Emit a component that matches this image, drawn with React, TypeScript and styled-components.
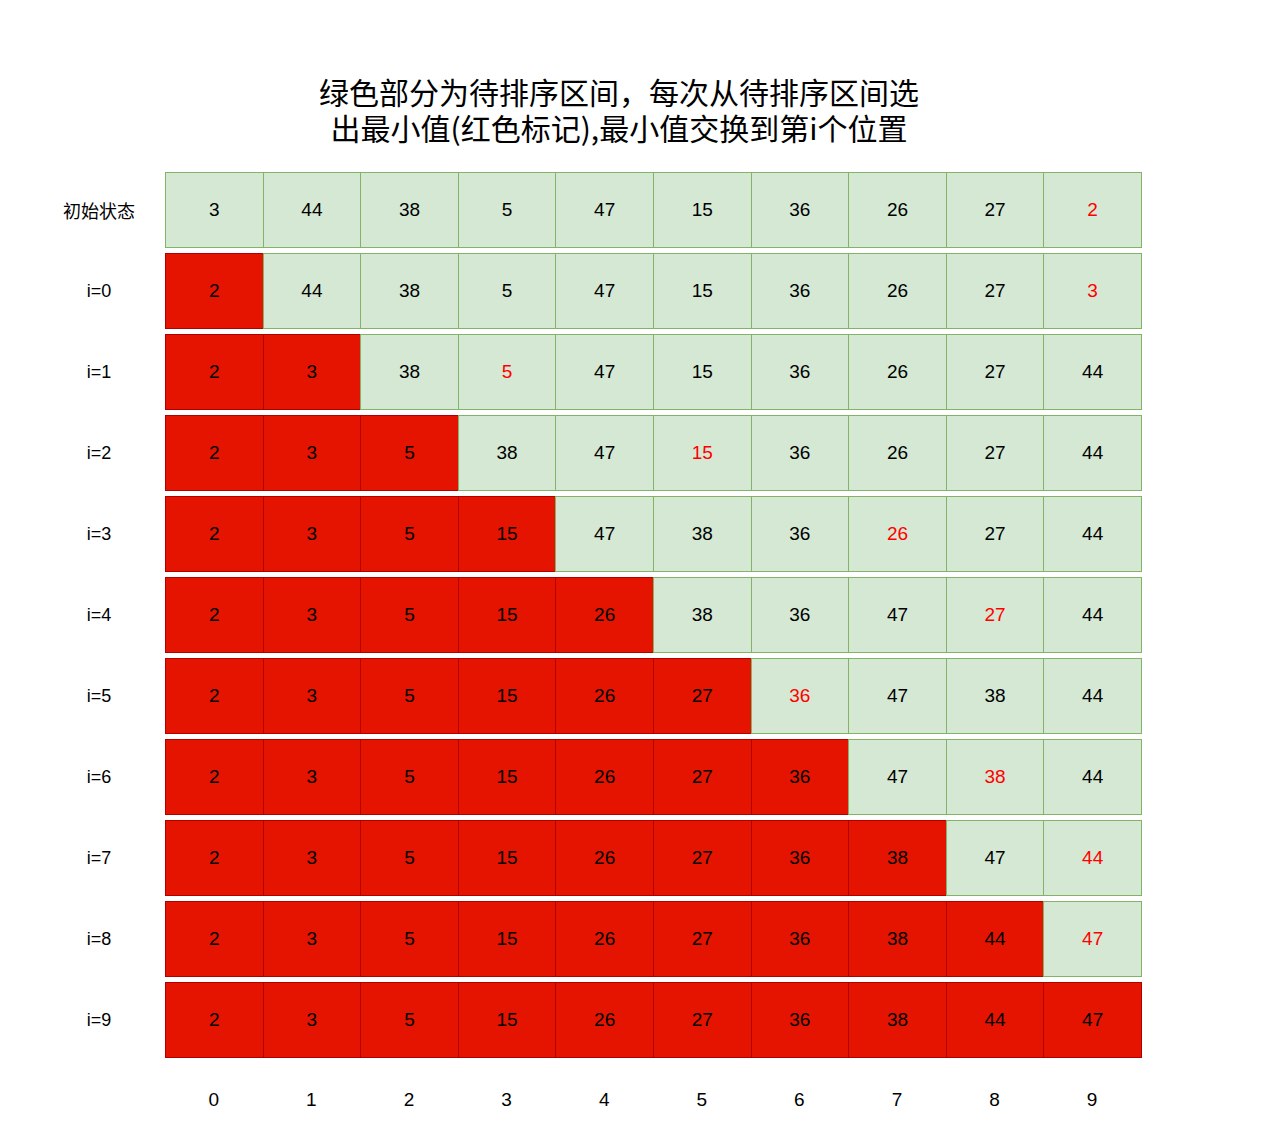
import styled, { createGlobalStyle } from "styled-components";

const GlobalStyle = createGlobalStyle`
  body {
    margin: 0;
    background: #ffffff;
    font-family: "Liberation Sans", Arial, "Noto Sans CJK SC", sans-serif;
  }
`;

type Step = { label: string; values: number[]; sorted: number; marked: number };

const steps: Step[] = [
  { label: "初始状态", values: [3, 44, 38, 5, 47, 15, 36, 26, 27, 2], sorted: 0, marked: 9 },
  { label: "i=0", values: [2, 44, 38, 5, 47, 15, 36, 26, 27, 3], sorted: 1, marked: 9 },
  { label: "i=1", values: [2, 3, 38, 5, 47, 15, 36, 26, 27, 44], sorted: 2, marked: 3 },
  { label: "i=2", values: [2, 3, 5, 38, 47, 15, 36, 26, 27, 44], sorted: 3, marked: 5 },
  { label: "i=3", values: [2, 3, 5, 15, 47, 38, 36, 26, 27, 44], sorted: 4, marked: 7 },
  { label: "i=4", values: [2, 3, 5, 15, 26, 38, 36, 47, 27, 44], sorted: 5, marked: 8 },
  { label: "i=5", values: [2, 3, 5, 15, 26, 27, 36, 47, 38, 44], sorted: 6, marked: 6 },
  { label: "i=6", values: [2, 3, 5, 15, 26, 27, 36, 47, 38, 44], sorted: 7, marked: 8 },
  { label: "i=7", values: [2, 3, 5, 15, 26, 27, 36, 38, 47, 44], sorted: 8, marked: 9 },
  { label: "i=8", values: [2, 3, 5, 15, 26, 27, 36, 38, 44, 47], sorted: 9, marked: 9 },
  { label: "i=9", values: [2, 3, 5, 15, 26, 27, 36, 38, 44, 47], sorted: 10, marked: -1 },
];

const Page = styled.div`
  width: 1261px;
  height: 1124px;
  display: flex;
  flex-direction: column;
`;

const Title = styled.div`
  width: 1238px;
  padding-top: 73px;
  text-align: center;
  font-family: "Noto Sans CJK SC", "Liberation Sans", sans-serif;
  font-size: 30px;
  line-height: 36px;
  color: #000000;
`;

const Board = styled.div`
  margin-top: 27px;
  display: flex;
  flex-direction: column;
  gap: 5px;
`;

const Row = styled.div`
  display: grid;
  grid-template-columns: 134px repeat(10, 97.6px);
  padding-left: 31px;
  height: 76px;
`;

const Label = styled.div`
  display: flex;
  align-items: center;
  justify-content: center;
  padding-left: 2px;
  font-family: "Liberation Sans", "Noto Sans CJK SC", sans-serif;
  font-size: 18px;
  color: #000000;
`;

const Cell = styled.div<{ $done: boolean; $marked: boolean }>`
  display: flex;
  align-items: center;
  justify-content: center;
  box-sizing: border-box;
  margin-right: -1px;
  border: 1px solid ${(p) => (p.$done ? "#b20000" : "#82b366")};
  background: ${(p) => (p.$done ? "#e51400" : "#d5e8d4")};
  color: ${(p) => (p.$marked ? "#ff0000" : "#000000")};
  font-size: 19px;
`;

const IndexRow = styled.div`
  display: grid;
  grid-template-columns: 134px repeat(10, 97.6px);
  padding-left: 31px;
  margin-top: 30px;
  height: 24px;
`;

const IndexCell = styled.div`
  display: flex;
  align-items: center;
  justify-content: center;
  font-size: 19px;
  color: #000000;
`;

export default function App() {
  return (
    <Page>
      <GlobalStyle />
      <Title>
        绿色部分为待排序区间，每次从待排序区间选
        <br />
        出最小值(红色标记),最小值交换到第i个位置
      </Title>
      <Board>
        {steps.map((s) => (
          <Row key={s.label}>
            <Label>{s.label}</Label>
            {s.values.map((v, i) => (
              <Cell key={i} $done={i < s.sorted} $marked={i === s.marked && i >= s.sorted}>
                {v}
              </Cell>
            ))}
          </Row>
        ))}
      </Board>
      <IndexRow>
        <div />
        {Array.from({ length: 10 }, (_, i) => (
          <IndexCell key={i}>{i}</IndexCell>
        ))}
      </IndexRow>
    </Page>
  );
}
